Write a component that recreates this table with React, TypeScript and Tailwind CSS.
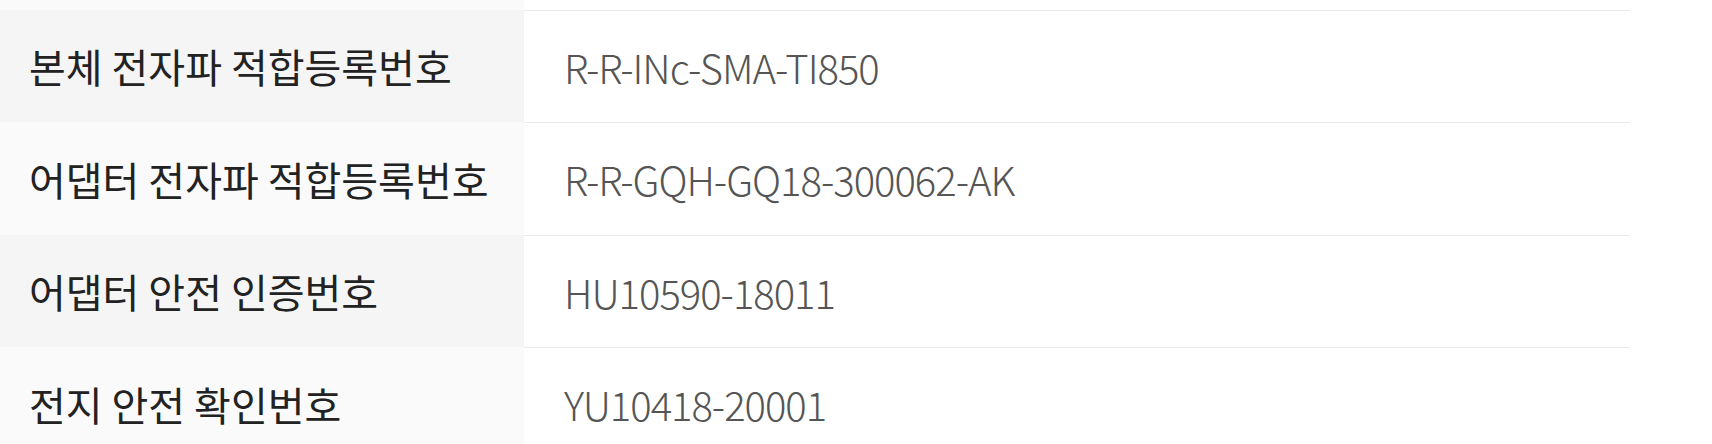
import React from "react";

const rows = [
  { label: "본체 전자파 적합등록번호", value: "R-R-INc-SMA-TI850", bg: "bg-[#f5f5f5]", h: "h-[112px]" },
  { label: "어댑터 전자파 적합등록번호", value: "R-R-GQH-GQ18-300062-AK", bg: "bg-[#fafafa]", h: "h-[113px]" },
  { label: "어댑터 안전 인증번호", value: "HU10590-18011", bg: "bg-[#f5f5f5]", h: "h-[112px]" },
  { label: "전지 안전 확인번호", value: "YU10418-20001", bg: "bg-[#fafafa]", h: "h-[113px]" },
];

export default function App() {
  return (
    <div className="w-[1712px] h-[444px] overflow-hidden bg-white" style={{ fontFamily: '"Noto Sans CJK KR", "Noto Sans", sans-serif' }}>
      <div className="w-[1630px]">
        <div className="flex h-[10px]">
          <div className="w-[524px] bg-[#fafafa]" />
          <div className="flex-1 bg-white" />
        </div>
        {rows.map((r) => (
          <div key={r.label} className={`flex ${r.h}`}>
            <div className={`w-[524px] shrink-0 ${r.bg} flex items-center pl-[29px] text-[40px] text-[#222]`}>
              {r.label}
            </div>
            <div className="flex-1 border-t border-[#ebebeb] bg-white flex items-center pl-[40px] text-[40px] font-light text-[#555] tracking-[-1px]">
              {r.value}
            </div>
          </div>
        ))}
      </div>
    </div>
  );
}
